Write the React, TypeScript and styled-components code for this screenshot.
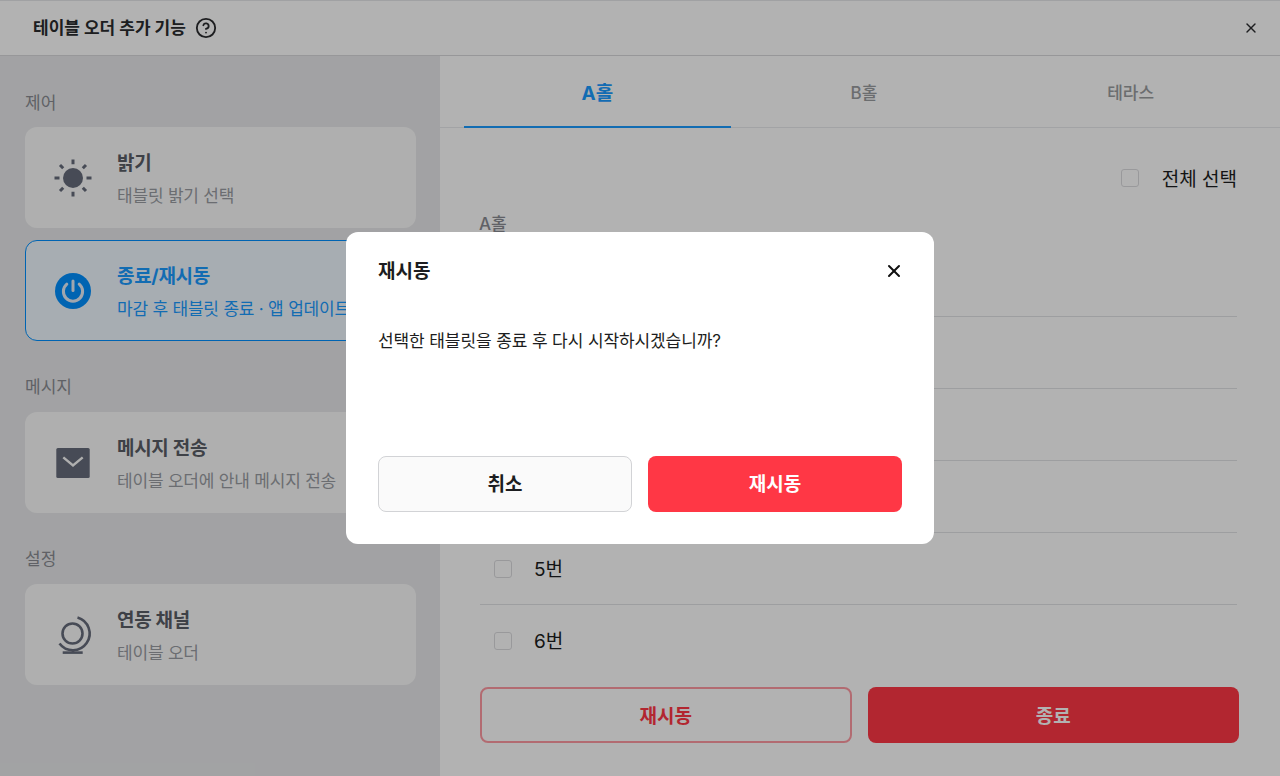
import styled, { createGlobalStyle } from 'styled-components';
import { X, CircleHelp } from 'lucide-react';

const GlobalStyle = createGlobalStyle`
  * {
    box-sizing: border-box;
  }
  html, body {
    margin: 0;
    padding: 0;
    background: #fff;
  }
  body {
    font-family: Inter, "Noto Sans CJK KR", sans-serif;
    color: #2a2b2e;
  }
`;

const SunIcon = () => (
  <svg width='40' height='40' viewBox='0 0 40 40' fill='#666c7b'>
    <circle cx='20' cy='20' r='10' />
    <g stroke='#666c7b' strokeWidth='3'>
      <path d='M20 1.5v4.8M20 33.7v4.8M1.5 20h5M33.5 20h5' />
      <path d='M7 7l3.2 3.2M29.8 29.8L33 33M7 33l3.2-3.2M29.8 10.2L33 7' />
    </g>
  </svg>
);

const PowerIcon = () => (
  <svg width='40' height='40' viewBox='0 0 40 40' fill='none'>
    <circle cx='20' cy='20' r='18' fill='#0090ff' />
    <path d='M20 10v9.5' stroke='#e6eefa' strokeWidth='3' strokeLinecap='round' />
    <path d='M13.8 13.2a9.6 9.6 0 1 0 12.4 0' stroke='#e6eefa' strokeWidth='3' strokeLinecap='round' />
  </svg>
);

const MailIcon = () => (
  <svg width='40' height='40' viewBox='0 0 40 40'>
    <rect x='3.3' y='5' width='33.4' height='30' rx='1.5' fill='#666c7b' />
    <path d='M10.3 14.4L20 22.5l9.7-8.1' fill='none' stroke='#fbfbfb' strokeWidth='2.4' />
  </svg>
);

const GlobeIcon = () => (
  <svg width='40' height='40' viewBox='0 0 40 40' fill='none' stroke='#666c7b' strokeWidth='2.6'>
    <circle cx='19.5' cy='18.5' r='10' />
    <path d='M24.5 2.5A16.7 16.7 0 1 1 6.5 28.5' />
    <path d='M20 35v2.5' />
    <path d='M9.7 37.6h20' />
  </svg>
);

const items = [1, 2, 3, 4, 5, 6];

export default function App() {
  return (
    <>
      <GlobalStyle />
      <Page>
        <Header>
          <HeaderTitle>
            <h1>테이블 오더 추가 기능</h1>
            <CircleHelp size={22} strokeWidth={2} color='#2a2b2e' />
          </HeaderTitle>
          <X size={16} strokeWidth={2} color='#2a2b2e' />
        </Header>
        <Body>
          <Sidebar>
            <SectionLabel>제어</SectionLabel>
            <MenuCard>
              <SunIcon />
              <MenuText>
                <MenuTitle>밝기</MenuTitle>
                <MenuDesc>태블릿 밝기 선택</MenuDesc>
              </MenuText>
            </MenuCard>
            <MenuCard $active>
              <PowerIcon />
              <MenuText>
                <MenuTitle $active>종료/재시동</MenuTitle>
                <MenuDesc $active>마감 후 태블릿 종료 · 앱 업데이트 시</MenuDesc>
              </MenuText>
            </MenuCard>
            <SectionLabel $spaced>메시지</SectionLabel>
            <MenuCard>
              <MailIcon />
              <MenuText>
                <MenuTitle>메시지 전송</MenuTitle>
                <MenuDesc>테이블 오더에 안내 메시지 전송</MenuDesc>
              </MenuText>
            </MenuCard>
            <SectionLabel $spaced>설정</SectionLabel>
            <MenuCard>
              <GlobeIcon />
              <MenuText>
                <MenuTitle>연동 채널</MenuTitle>
                <MenuDesc>테이블 오더</MenuDesc>
              </MenuText>
            </MenuCard>
          </Sidebar>
          <Content>
            <Tabs>
              <Tab $active>A홀</Tab>
              <Tab>B홀</Tab>
              <Tab>테라스</Tab>
            </Tabs>
            <SelectAll>
              <CheckBox />
              <span>전체 선택</span>
            </SelectAll>
            <HallLabel>A홀</HallLabel>
            <TableList>
              {items.map((n) => (
                <TableRow key={n}>
                  <CheckBox />
                  <span>{n}번</span>
                </TableRow>
              ))}
            </TableList>
            <Actions>
              <OutlineButton>재시동</OutlineButton>
              <SolidButton>종료</SolidButton>
            </Actions>
          </Content>
        </Body>
        <Overlay>
          <Modal>
            <ModalHeader>
              <h2>재시동</h2>
              <X size={20} strokeWidth={2.4} color='#111' />
            </ModalHeader>
            <ModalMessage>선택한 태블릿을 종료 후 다시 시작하시겠습니까?</ModalMessage>
            <ModalActions>
              <CancelButton>취소</CancelButton>
              <ConfirmButton>재시동</ConfirmButton>
            </ModalActions>
          </Modal>
        </Overlay>
      </Page>
    </>
  );
}

const Page = styled.div`
  position: relative;
  width: 1280px;
  height: 776px;
  overflow: hidden;
  display: flex;
  flex-direction: column;
  background: #fff;
`;

const Header = styled.header`
  height: 56px;
  flex: none;
  display: flex;
  align-items: center;
  justify-content: space-between;
  padding: 0 21px 0 33px;
  background: #fff;
  border-top: 1px solid #e6e7ea;
  border-bottom: 1px solid #d8d9dc;
`;

const HeaderTitle = styled.div`
  display: flex;
  align-items: center;
  gap: 9px;

  h1 {
    margin: 0;
    font-size: 17px;
    font-weight: 700;
    line-height: 24px;
  }
`;

const Body = styled.div`
  flex: 1;
  display: flex;
  min-height: 0;
`;

const Sidebar = styled.aside`
  width: 440px;
  flex: none;
  padding: 36px 24px 0 25px;
  background: #e8e9eb;
  display: flex;
  flex-direction: column;
`;

const SectionLabel = styled.div<{ $spaced?: boolean }>`
  font-size: 17px;
  line-height: 22px;
  color: #8a8c92;
  margin-top: ${(p) => (p.$spaced ? '35px' : '0')};
  margin-bottom: ${(p) => (p.$spaced ? '14px' : '13px')};
`;

const MenuCard = styled.div<{ $active?: boolean }>`
  height: 101px;
  flex: none;
  display: flex;
  align-items: center;
  gap: 24px;
  padding: 0 0 0 27px;
  border-radius: 12px;
  background: ${(p) => (p.$active ? '#f0f8ff' : '#fbfbfb')};
  border: 1px solid ${(p) => (p.$active ? '#0090ff' : 'transparent')};

  & + & {
    margin-top: 12px;
  }

  svg {
    flex: none;
  }
`;

const MenuText = styled.div`
  display: flex;
  flex-direction: column;
  gap: 7px;
  padding-top: 3px;
  white-space: nowrap;
`;

const MenuTitle = styled.div<{ $active?: boolean }>`
  font-size: 19px;
  letter-spacing: -0.3px;
  font-weight: 700;
  line-height: 26px;
  color: ${(p) => (p.$active ? '#1a9bff' : '#5a5d66')};
`;

const MenuDesc = styled.div<{ $active?: boolean }>`
  font-size: 17px;
  letter-spacing: -0.2px;
  line-height: 24px;
  color: ${(p) => (p.$active ? '#1a9bff' : '#9a9da3')};
`;

const Content = styled.main`
  flex: 1;
  min-width: 0;
  background: #fff;
  display: flex;
  flex-direction: column;
  padding: 0 43px 0 40px;
`;

const Tabs = styled.nav`
  display: flex;
  margin: 0 -43px 0 -40px;
  padding: 0 16px 0 24px;
  border-bottom: 1px solid #e9eaec;
  height: 72px;
  flex: none;
`;

const Tab = styled.div<{ $active?: boolean }>`
  flex: 1;
  display: flex;
  align-items: center;
  justify-content: center;
  font-size: ${(p) => (p.$active ? '19px' : '17px')};
  font-weight: ${(p) => (p.$active ? 700 : 500)};
  color: ${(p) => (p.$active ? '#1a9bff' : '#9a9ca0')};
  border-bottom: 2px solid ${(p) => (p.$active ? '#1a9bff' : 'transparent')};
  margin-bottom: -1px;
`;

const SelectAll = styled.label`
  display: flex;
  align-items: center;
  justify-content: flex-end;
  gap: 23px;
  margin-top: 38px;
  height: 24px;
  font-size: 19px;
  font-weight: 400;
  color: #1c1d20;

  span:last-child {
    padding-bottom: 2px;
  }
`;

const CheckBox = styled.span`
  display: block;
  width: 18px;
  height: 18px;
  flex: none;
  border: 1.5px solid #dcdcdf;
  border-radius: 3px;
  background: #fff;
`;

const HallLabel = styled.div`
  margin: 22px 0 0 -1px;
  height: 24px;
  line-height: 24px;
  font-size: 17px;
  font-weight: 500;
  color: #8a8c92;
`;

const TableList = styled.div`
  display: flex;
  flex-direction: column;
  margin-top: 9px;
`;

const TableRow = styled.div`
  height: 72px;
  flex: none;
  display: flex;
  align-items: center;
  gap: 22px;
  padding-left: 14px;
  font-size: 19px;
  font-weight: 400;
  color: #1c1d20;

  span:last-child {
    padding-bottom: 3px;
  }

  &:not(:last-child) {
    border-bottom: 1px solid #e1e2e5;
  }
`;

const Actions = styled.div`
  display: grid;
  grid-template-columns: 1fr 1fr;
  gap: 16px;
  margin: 10px -2px 0 0;
`;

const OutlineButton = styled.button`
  height: 56px;
  padding: 0 0 2px;
  border: 2px solid #ff9aa3;
  border-radius: 8px;
  background: #fff;
  color: #ff3745;
  font: 700 19px Inter, "Noto Sans CJK KR", sans-serif;
`;

const SolidButton = styled.button`
  height: 56px;
  padding: 0 0 2px;
  border: none;
  border-radius: 8px;
  background: #ff3745;
  color: #fff;
  font: 700 19px Inter, "Noto Sans CJK KR", sans-serif;
`;

const Overlay = styled.div`
  position: absolute;
  inset: 0;
  display: flex;
  align-items: center;
  justify-content: center;
  background: rgba(0, 0, 0, 0.3);
`;

const Modal = styled.div`
  width: 588px;
  height: 312px;
  background: #fff;
  border-radius: 12px;
  padding: 25px 32px 32px;
  display: flex;
  flex-direction: column;
`;

const ModalHeader = styled.div`
  display: flex;
  align-items: center;
  justify-content: space-between;
  height: 28px;

  h2 {
    margin: 2px 0 0;
    font-size: 19px;
    font-weight: 700;
    line-height: 28px;
    color: #1c1d20;
  }

  svg {
    margin-right: -2px;
  }
`;

const ModalMessage = styled.p`
  margin: 44px 0 0;
  font-size: 17px;
  letter-spacing: -0.1px;
  line-height: 24px;
  color: #1c1d20;
`;

const ModalActions = styled.div`
  margin-top: auto;
  display: grid;
  grid-template-columns: 1fr 1fr;
  gap: 16px;
`;

const CancelButton = styled.button`
  height: 56px;
  padding: 0 0 4px;
  border: 1px solid #d2d3d6;
  border-radius: 8px;
  background: #fafafa;
  color: #1c1d20;
  font: 700 19px Inter, "Noto Sans CJK KR", sans-serif;
`;

const ConfirmButton = styled.button`
  height: 56px;
  padding: 0 0 4px;
  border: none;
  border-radius: 8px;
  background: #ff3745;
  color: #fff;
  font: 700 19px Inter, "Noto Sans CJK KR", sans-serif;
`;
